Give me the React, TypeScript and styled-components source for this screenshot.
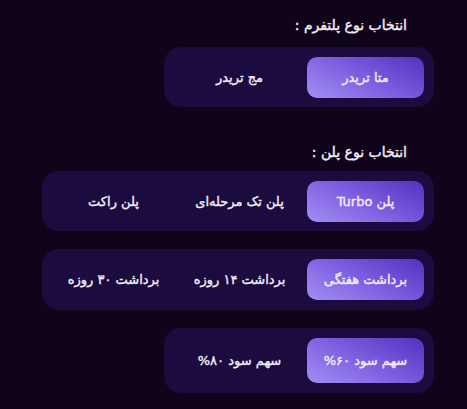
import React, { useState } from "react";
import styled, { createGlobalStyle } from "styled-components";

const Global = createGlobalStyle`
  html, body { margin: 0; padding: 0; background: #0f0419; }
  body { font-family: "DejaVu Sans", "Noto Sans", sans-serif; direction: rtl; }
`;

const Page = styled.div`
  width: 467px;
  height: 409px;
  box-sizing: border-box;
  padding: 15px 33px 0 0;
  display: flex;
  flex-direction: column;
  align-items: flex-start;
  background: #0f0419;
`;

const Section = styled.section<{ $top?: number }>`
  display: flex;
  flex-direction: column;
  align-items: flex-start;
  margin-top: ${(p) => p.$top ?? 0}px;
`;

const Title = styled.h3<{ $mb: number }>`
  margin: 0 27px ${(p) => p.$mb}px 0;
  font-size: 14px;
  font-weight: 400;
  -webkit-text-stroke: 0.4px #f1eefb;
  line-height: 20px;
  color: #f1eefb;
`;

const Panel = styled.div<{ $width: number; $height?: number; $mt?: number }>`
  display: flex;
  align-items: center;
  gap: 9px;
  box-sizing: border-box;
  width: ${(p) => p.$width}px;
  height: ${(p) => p.$height ?? 60}px;
  padding: 0 10px;
  margin-top: ${(p) => p.$mt ?? 0}px;
  border-radius: 17px;
  background: #1c0b3e;
`;

const Option = styled.button<{ $active: boolean; $height?: number }>`
  flex: 0 0 117px;
  height: ${(p) => p.$height ?? 41}px;
  border: 0;
  border-radius: 10px;
  padding: 0;
  font-family: inherit;
  font-size: 13px;
  font-weight: 400;
  -webkit-text-stroke: 0.35px #f3f0fc;
  color: #f3f0fc;
  cursor: pointer;
  direction: rtl;
  background: ${(p) =>
    p.$active
      ? "linear-gradient(28deg, #a38ef4 0%, #7c5ee0 50%, #5331bf 100%)"
      : "transparent"};
`;

type GroupProps = {
  options: string[];
  width: number;
  height?: number;
  btnHeight?: number;
  mt?: number;
};

function Group({ options, width, height, btnHeight, mt }: GroupProps) {
  const [sel, setSel] = useState(0);
  return (
    <Panel $width={width} $height={height} $mt={mt}>
      {options.map((o, i) => (
        <Option key={o} $active={sel === i} $height={btnHeight} onClick={() => setSel(i)}>
          {o}
        </Option>
      ))}
    </Panel>
  );
}

export default function App() {
  return (
    <>
      <Global />
      <Page>
        <Section>
          <Title $mb={12}>انتخاب نوع پلتفرم :</Title>
          <Group width={270} options={["متا تریدر", "مج تریدر"]} />
        </Section>
        <Section $top={35}>
          <Title $mb={9}>انتخاب نوع پلن :</Title>
          <Group width={392} options={["پلن Turbo", "پلن تک مرحله‌ای", "پلن راکت"]} />
          <Group mt={18} width={392} height={61} options={["برداشت هفتگی", "برداشت ۱۴ روزه", "برداشت ۳۰ روزه"]} />
          <Group mt={18} width={270} height={65} btnHeight={45} options={["سهم سود ۶۰%", "سهم سود ۸۰%"]} />
        </Section>
      </Page>
    </>
  );
}
